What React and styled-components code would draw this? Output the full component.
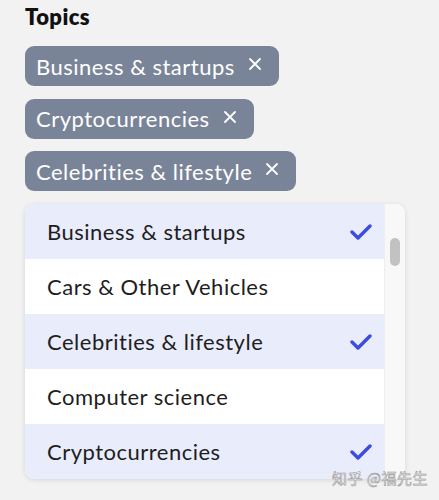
import React from "react";
import styled, { createGlobalStyle } from "styled-components";

const Global = createGlobalStyle`
  html, body { margin: 0; padding: 0; background: #f2f2f2; }
  body { font-family: "Lato", "Noto Sans", sans-serif; font-variant-ligatures: none; }
`;

const Page = styled.div`
  width: 439px;
  height: 500px;
  box-sizing: border-box;
  padding: 4px 0 0 25px;
  position: relative;
  overflow: hidden;
`;

const Title = styled.h2`
  margin: 0 0 16px 0;
  font-size: 22px;
  line-height: 26px;
  font-weight: 800;
  letter-spacing: 0.4px;
  color: #111;
`;

const Chips = styled.div`
  display: flex;
  flex-direction: column;
  align-items: flex-start;
  gap: 12.5px;
`;

const Chip = styled.div`
  display: flex;
  align-items: center;
  height: 40px;
  box-sizing: border-box;
  padding: 0 17px 0 11px;
  gap: 13px;
  background: #7a8499;
  border-radius: 9px;
  color: #fff;
  font-size: 22px;
  letter-spacing: 0.5px;
`;

const Close = styled.span`
  display: flex;
  width: 14px;
  height: 14px;
  margin-top: -4px;
`;

const Dropdown = styled.div`
  margin-top: 13px;
  width: 380px;
  height: 275px;
  display: flex;
  background: #fff;
  border-radius: 9px;
  box-shadow: 0 1px 5px rgba(0, 0, 0, 0.12);
  overflow: hidden;
`;

const List = styled.div`
  flex: 1;
  display: flex;
  flex-direction: column;
`;

const Option = styled.div`
  height: 55px;
  flex: none;
  display: flex;
  align-items: center;
  justify-content: space-between;
  padding: 0 12px 0 22px;
  background: ${(p) => (p.$selected ? "#e9ecfb" : "#fff")};
  color: #1e1e1e;
  font-size: 22px;
  letter-spacing: 0.5px;
`;

const Track = styled.div`
  width: 20px;
  background: #f8f8f8;
  border-left: 1px solid #eee;
  padding-top: 34px;
  display: flex;
  justify-content: center;
`;

const Thumb = styled.div`
  width: 10px;
  height: 28px;
  border-radius: 5px;
  background: #c2c2c2;
`;

const Watermark = styled.div`
  position: absolute;
  right: 11px;
  bottom: 12px;
  font-family: "Noto Sans CJK SC", sans-serif;
  font-size: 15px;
  color: #fff;
  -webkit-text-stroke: 0.6px #9a9a9a;
  letter-spacing: 0.5px;
`;

const X = () => (
  <svg width="14" height="14" viewBox="0 0 14 14">
    <path d="M2 2 L12 12 M12 2 L2 12" stroke="#fff" strokeWidth="1.8" strokeLinecap="round" />
  </svg>
);

const Check = () => (
  <svg width="22" height="18" viewBox="0 0 22 18">
    <path d="M2 9 L8 15 L20 3" stroke="#3b4ce0" strokeWidth="3.4" fill="none" strokeLinecap="round" strokeLinejoin="round" />
  </svg>
);

const chips = ["Business & startups", "Cryptocurrencies", "Celebrities & lifestyle"];
const options = [
  ["Business & startups", true],
  ["Cars & Other Vehicles", false],
  ["Celebrities & lifestyle", true],
  ["Computer science", false],
  ["Cryptocurrencies", true],
];

export default function App() {
  return (
    <Page>
      <Global />
      <Title>Topics</Title>
      <Chips>
        {chips.map((c) => (
          <Chip key={c}>
            {c}
            <Close><X /></Close>
          </Chip>
        ))}
      </Chips>
      <Dropdown>
        <List>
          {options.map(([label, sel]) => (
            <Option key={label} $selected={sel}>
              {label}
              {sel && <Check />}
            </Option>
          ))}
        </List>
        <Track><Thumb /></Track>
      </Dropdown>
      <Watermark>知乎 @福先生</Watermark>
    </Page>
  );
}
